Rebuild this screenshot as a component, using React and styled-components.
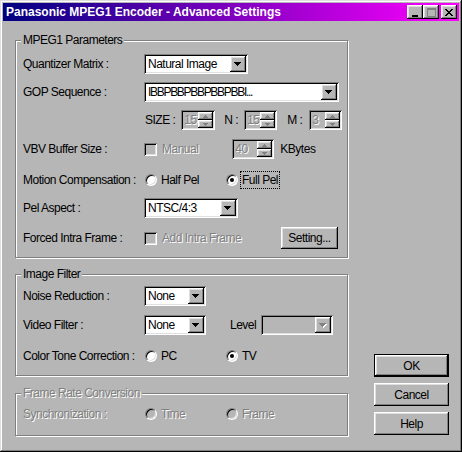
import React from "react";
import styled, { createGlobalStyle, css } from "styled-components";

const FACE = "#b6b6b6";

const GlobalStyle = createGlobalStyle`
  body {
    margin: 0;
    background: ${FACE};
  }
`;

const raised = css`
  box-shadow: inset -1px -1px #000, inset 1px 1px #fff, inset -2px -2px #808080,
    inset 2px 2px #dfdfdf;
`;

const sunken = css`
  box-shadow: inset 1px 1px #808080, inset -1px -1px #fff, inset 2px 2px #000,
    inset -2px -2px #dfdfdf;
`;

const Window = styled.div`
  width: 462px;
  height: 452px;
  box-sizing: border-box;
  padding: 3px;
  background: ${FACE};
  box-shadow: inset -1px -1px #000, inset 1px 1px #dfdfdf, inset -2px -2px #808080,
    inset 2px 2px #fff;
  display: flex;
  flex-direction: column;
  font: 12px "Liberation Sans", Arial, sans-serif;
  letter-spacing: -0.5px;
  color: #000;
`;

const TitleBar = styled.div`
  height: 18px;
  flex-shrink: 0;
  display: flex;
  align-items: center;
  padding: 0 2px 0 3px;
  background: linear-gradient(to right, #000080, #ff00ff);
`;

const TitleText = styled.div`
  flex: 1;
  color: #fff;
  font-weight: bold;
  font-size: 12px;
  letter-spacing: 0;
  white-space: nowrap;
`;

const CaptionBtn = styled.div`
  width: 16px;
  height: 14px;
  background: ${FACE};
  ${raised};
  display: flex;
  align-items: center;
  justify-content: center;
  margin-left: ${(p) => p.$ml || 0}px;
`;

const Body = styled.div`
  display: flex;
  align-items: flex-start;
  gap: 26px;
  padding: 19px 0 0 12px;
`;

const LeftCol = styled.div`
  display: flex;
  flex-direction: column;
`;

const RightCol = styled.div`
  align-self: stretch;
  display: flex;
  flex-direction: column;
  justify-content: flex-end;
  gap: 6px;
  padding-bottom: 1px;
`;

const Group = styled.div`
  position: relative;
  width: 333px;
  box-sizing: border-box;
  border: 1px solid #808080;
  box-shadow: 1px 1px #fff, inset 1px 1px #fff;
  margin-top: ${(p) => p.$mt || 0}px;
  padding: 0 0 ${(p) => p.$pb || 0}px 7px;
`;

const Legend = styled.div`
  position: absolute;
  top: -8px;
  left: 5px;
  padding: 0 2px;
  line-height: 14px;
  background: ${FACE};
  ${(p) =>
    p.$disabled &&
    css`
      color: #808080;
      text-shadow: 1px 1px #fff;
    `}
`;

const Row = styled.div`
  display: flex;
  align-items: center;
  height: ${(p) => p.$h || 20}px;
  margin-top: ${(p) => p.$mt || 0}px;
`;

const Label = styled.div`
  width: 121px;
  flex-shrink: 0;
  white-space: nowrap;
  ${(p) =>
    p.$disabled &&
    css`
      color: #808080;
      text-shadow: 1px 1px #fff;
    `}
`;

const Text = styled.span`
  white-space: nowrap;
  margin-left: ${(p) => p.$ml || 0}px;
  margin-right: ${(p) => p.$mr || 0}px;
  ${(p) =>
    p.$disabled &&
    css`
      color: #808080;
      text-shadow: 1px 1px #fff;
    `}
  ${(p) =>
    p.$focus &&
    css`
      outline: 1px dotted #000;
      padding: 1px 1px;
    `}
`;

const ComboBox = styled.div`
  width: ${(p) => p.$w}px;
  height: 20px;
  box-sizing: border-box;
  padding: 2px;
  display: flex;
  background: ${(p) => (p.$disabled ? FACE : "#fff")};
  margin-left: ${(p) => p.$ml || 0}px;
  ${sunken};
`;

const ComboValue = styled.div`
  flex: 1;
  line-height: 16px;
  padding-left: 2px;
  white-space: nowrap;
  overflow: hidden;
  letter-spacing: ${(p) => (p.$tight ? "-1.3px" : "inherit")};
`;

const ArrowBtn = styled.div`
  width: 16px;
  height: 16px;
  background: ${FACE};
  ${raised};
  display: flex;
  align-items: center;
  justify-content: center;
`;

const SpinBox = styled.div`
  width: ${(p) => p.$w}px;
  height: 20px;
  box-sizing: border-box;
  padding: 2px;
  display: flex;
  background: ${FACE};
  margin-left: ${(p) => p.$ml || 0}px;
  ${sunken};
`;

const SpinValue = styled.div`
  flex: 1;
  line-height: 16px;
  padding-left: 1px;
  color: #808080;
  text-shadow: 1px 1px #fff;
`;

const SpinBtns = styled.div`
  width: 15px;
  display: flex;
  flex-direction: column;
`;

const SpinBtn = styled.div`
  height: 8px;
  background: ${FACE};
  ${raised};
  display: flex;
  align-items: center;
  justify-content: center;
`;

const CheckBox = styled.div`
  width: 13px;
  height: 13px;
  flex-shrink: 0;
  box-sizing: border-box;
  background: ${(p) => (p.$disabled ? FACE : "#fff")};
  ${sunken};
`;

const RadioSlot = styled.div`
  width: 81px;
  display: flex;
  align-items: center;
  padding-left: 1px;
  box-sizing: border-box;
`;

const Radio = styled.div`
  position: relative;
  width: 12px;
  height: 12px;
  flex-shrink: 0;
  box-sizing: border-box;
  border-radius: 50%;
  border: 1px solid;
  border-color: #808080 #fff #fff #808080;
  background: ${(p) => (p.$disabled ? FACE : "#fff")};
  box-shadow: inset 1px 1px #000, inset -1px -1px #dfdfdf;
  ${(p) =>
    p.$checked &&
    css`
      &::after {
        content: "";
        position: absolute;
        left: 3px;
        top: 3px;
        width: 4px;
        height: 4px;
        border-radius: 50%;
        background: #000;
      }
    `}
`;

const PushButton = styled.div`
  width: ${(p) => p.$w || 75}px;
  height: ${(p) => p.$h || 23}px;
  box-sizing: border-box;
  display: flex;
  align-items: center;
  justify-content: center;
  background: ${FACE};
  margin-left: ${(p) => p.$ml || "0"};
  margin-right: ${(p) => p.$mr || 0}px;
  ${(p) =>
    p.$default
      ? css`
          box-shadow: inset 0 0 0 1px #000, inset -2px -2px #000, inset 2px 2px #fff,
            inset -3px -3px #808080, inset 3px 3px #dfdfdf;
        `
      : raised};
`;

const DownArrow = ({ color = "#000" }) => (
  <svg width="8" height="5" viewBox="0 0 8 5">
    {color !== "#000" && (
      <path d="M1 1h7v1H1z M2 2h5v1H2z M3 3h3v1H3z M4 4h1v1H4z" fill="#fff" />
    )}
    <path d="M0 0h7v1H0z M1 1h5v1H1z M2 2h3v1H2z M3 3h1v1H3z" fill={color} />
  </svg>
);

const TinyArrow = ({ up }) => (
  <svg width="5" height="3" viewBox="0 0 5 3" style={{ transform: up ? "none" : "scaleY(-1)" }}>
    <path d="M2 0h1v1H2z M1 1h3v1H1z M0 2h5v1H0z" fill="#808080" />
  </svg>
);

const Combo = ({ value, w, ml, disabled, tight }) => (
  <ComboBox $w={w} $ml={ml} $disabled={disabled}>
    <ComboValue $tight={tight}>{value}</ComboValue>
    <ArrowBtn>
      <DownArrow color={disabled ? "#808080" : "#000"} />
    </ArrowBtn>
  </ComboBox>
);

const Spin = ({ value, w, ml }) => (
  <SpinBox $w={w} $ml={ml}>
    <SpinValue>{value}</SpinValue>
    <SpinBtns>
      <SpinBtn>
        <TinyArrow up />
      </SpinBtn>
      <SpinBtn>
        <TinyArrow />
      </SpinBtn>
    </SpinBtns>
  </SpinBox>
);

const RadioOpt = ({ label, checked, disabled, focus }) => (
  <RadioSlot>
    <Radio $checked={checked} $disabled={disabled} />
    <Text $ml={focus ? 3 : 4} $disabled={disabled} $focus={focus}>
      {label}
    </Text>
  </RadioSlot>
);

export default function App() {
  return (
    <>
      <GlobalStyle />
      <Window>
        <TitleBar>
          <TitleText>Panasonic MPEG1 Encoder - Advanced Settings</TitleText>
          <CaptionBtn>
            <svg width="8" height="9" viewBox="0 0 8 9">
              <path d="M1 7h6v2H1z" fill="#000" />
            </svg>
          </CaptionBtn>
          <CaptionBtn>
            <svg width="9" height="9" viewBox="0 0 9 9">
              <path d="M0 0h9v9H0z M1 2v6h7V2z" fill="#808080" fillRule="evenodd" />
            </svg>
          </CaptionBtn>
          <CaptionBtn $ml={2}>
            <svg width="8" height="7" viewBox="0 0 8 7">
              <path
                d="M0 0h2v1h1v1h2V1h1V0h2v1H7v1H6v1H5v1h1v1h1v1h1v1H6V6H5V5H3v1H2v1H0V6h1V5h1V4h1V3H2V2H1V1H0z"
                fill="#000"
              />
            </svg>
          </CaptionBtn>
        </TitleBar>

        <Body>
          <LeftCol>
            <Group $pb={8}>
              <Legend>MPEG1 Parameters</Legend>
              <Row $mt={13}>
                <Label>Quantizer Matrix :</Label>
                <Combo value="Natural Image" w={104} />
              </Row>
              <Row $mt={8}>
                <Label>GOP Sequence :</Label>
                <Combo value="IBBPBBPBBPBBPBBI..." w={195} tight />
              </Row>
              <Row $mt={8}>
                <Label />
                <Text $ml={1}>SIZE :</Text>
                <Spin value="15" w={34} ml={6} />
                <Text $ml={9}>N :</Text>
                <Spin value="15" w={33} ml={6} />
                <Text $ml={10}>M :</Text>
                <Spin value="3" w={33} ml={7} />
              </Row>
              <Row $mt={9}>
                <Label>VBV Buffer Size :</Label>
                <CheckBox $disabled />
                <Text $ml={5} $disabled>
                  Manual
                </Text>
                <Spin value="40" w={42} ml={34} />
                <Text $ml={6}>KBytes</Text>
              </Row>
              <Row $mt={11}>
                <Label>Motion Compensation :</Label>
                <RadioOpt label="Half Pel" />
                <RadioOpt label="Full Pel" checked focus />
              </Row>
              <Row $mt={8}>
                <Label>Pel Aspect :</Label>
                <Combo value="NTSC/4:3" w={94} />
              </Row>
              <Row $mt={9} $h={22}>
                <Label>Forced Intra Frame :</Label>
                <CheckBox $disabled />
                <Text $ml={5} $disabled>
                  Add Intra Frame
                </Text>
                <PushButton $w={57} $h={22} $ml="auto" $mr={9}>
                  Setting...
                </PushButton>
              </Row>
            </Group>

            <Group $mt={16} $pb={9}>
              <Legend>Image Filter</Legend>
              <Row $mt={11}>
                <Label>Noise Reduction :</Label>
                <Combo value="None" w={62} />
              </Row>
              <Row $mt={9}>
                <Label>Video Filter :</Label>
                <Combo value="None" w={62} />
                <Text $ml={24}>Level</Text>
                <Combo value="" w={72} ml={5} disabled />
              </Row>
              <Row $mt={11}>
                <Label>Color Tone Correction :</Label>
                <RadioOpt label="PC" />
                <RadioOpt label="TV" checked />
              </Row>
            </Group>

            <Group $mt={17} $pb={11}>
              <Legend $disabled>Frame Rate Conversion</Legend>
              <Row $mt={10}>
                <Label $disabled>Synchronization :</Label>
                <RadioOpt label="Time" disabled />
                <RadioOpt label="Frame" disabled />
              </Row>
            </Group>
          </LeftCol>

          <RightCol>
            <PushButton $default>OK</PushButton>
            <PushButton>Cancel</PushButton>
            <PushButton>Help</PushButton>
          </RightCol>
        </Body>
      </Window>
    </>
  );
}
